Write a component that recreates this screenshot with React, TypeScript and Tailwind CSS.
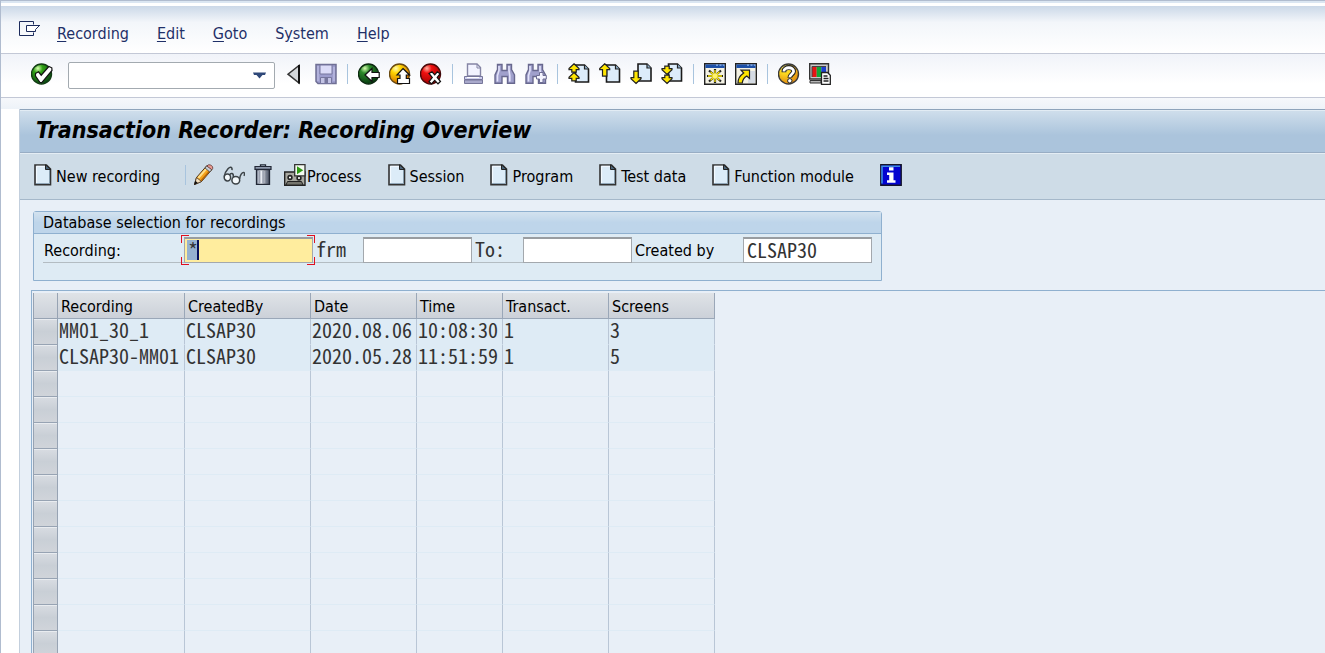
import type { ReactNode } from "react";

function Svg({ children }: { children: ReactNode }) {
  return (
    <svg viewBox="0 0 22 22" className="block h-[22px] w-[22px] shrink-0" aria-hidden="true">
      {children}
    </svg>
  );
}

function Ball({ id, light, mid, dark, rim, children }: { id: string; light: string; mid: string; dark: string; rim: string; children: ReactNode }) {
  return (
    <Svg>
      <defs>
        <radialGradient id={id} cx="0.32" cy="0.22" r="0.8">
          <stop offset="0" stopColor={light} />
          <stop offset="0.3" stopColor={mid} />
          <stop offset="1" stopColor={dark} />
        </radialGradient>
      </defs>
      <circle cx="10.5" cy="11" r="10" fill={`url(#${id})`} stroke={rim} strokeWidth="1.4" />
      {children}
    </Svg>
  );
}

const EnterIcon = () => (
  <Ball id="enter" light="#d8ffb0" mid="#2fa014" dark="#0a4a12" rim="#123c14">
    <path d="M4.5 10.5 7.5 8.8 10.2 12.2 17.8 3.5 20.8 4.8 21 7.5 11 19.5 9 19.5 4.5 13Z" fill="#fff" stroke="#111" strokeWidth="1.2" />
  </Ball>
);
const BackIcon = () => (
  <Ball id="back" light="#d8ffb0" mid="#2c8a2a" dark="#06380e" rim="#0c2a10">
    <path d="M7 12 14 5.5V9.5H21.2V14.5H14V18.5Z" fill="#fff" stroke="#111" strokeWidth="1.2" />
  </Ball>
);
const ExitIcon = () => (
  <Ball id="exit" light="#fffbb0" mid="#ffd400" dark="#d06a00" rim="#6a4a10">
    <path d="M14 5.5 20.5 12H17.3V15.5H20.5V20.5H8.5V15.5H11V12H8Z" fill="#fff" stroke="#111" strokeWidth="1.2" />
  </Ball>
);
const CancelIcon = () => (
  <Ball id="cancel" light="#ffb0a0" mid="#f01010" dark="#a00000" rim="#4a0808">
    <path d="M9 10.5 12 8.8 14.7 11.8 17.3 8.8 20 10.8 17.2 14.5 20.5 18.5 18 20.8 14.7 17.3 11.5 20.8 9 18.7 12.3 14.5Z" fill="#fff" stroke="#111" strokeWidth="1.2" />
  </Ball>
);
const HistoryIcon = () => (
  <Svg>
    <path d="M15 2.5V20L4 11.2Z" fill="#d3d6da" stroke="#333" strokeWidth="1.5" />
    <path d="M15 2V20.5" stroke="#111" strokeWidth="2" />
  </Svg>
);
const SaveIcon = () => (
  <Svg>
    <path d="M1 1.5H21V20.5H3L1 18.5Z" fill="#9d9dcd" stroke="#6f6f94" strokeWidth="1.5" />
    <path d="M5 2H17V11H5Z" fill="#dcdcf8" stroke="#76769e" />
    <path d="M5.5 14.5H16.5V20.5H5.5Z" fill="#c3c3e4" stroke="#76769e" />
    <path d="M9.5 15H13V20H9.5Z" fill="#77779e" />
    <path d="M3 3V18M19 4V18" stroke="#c6c6ea" />
  </Svg>
);
const PrintIcon = () => (
  <Svg>
    <path d="M4.5 1H14L17.5 4.5V13H4.5Z" fill="#f2f3ff" stroke="#8585a5" strokeWidth="1.4" />
    <path d="M14 1V5H18" fill="none" stroke="#8585a5" />
    <path d="M1.5 13.5H19.5V16.5H1.5Z" fill="#cfcfef" stroke="#77779a" />
    <path d="M1.5 17H19.5V20.5H1.5Z" fill="#a9a9cb" stroke="#77779a" />
    <path d="M4 14.5H16" stroke="#fff" />
  </Svg>
);
const Binoculars = () => (
  <>
    <path d="M3.5 1.5H8V7.5H13V1.5H17.5V6.5L20.5 12V20.3H13.5V13.5H8V20.3H1V12L3.5 6.5Z" fill="#a0a0cc" stroke="#68688e" strokeWidth="1.4" />
    <path d="M5 3V7.5L3.5 12.5V18.5M15 3V7.5L15.8 12.5V18.5" fill="none" stroke="#e3e3fa" strokeWidth="1.6" />
  </>
);
const FindIcon = () => (
  <Svg>
    <Binoculars />
  </Svg>
);
const FindNextIcon = () => (
  <Svg>
    <Binoculars />
    <path d="M14.5 9.5H18V12.5H21.3V16H18V19.5H14.5V16H11.5V12.5H14.5Z" fill="#f4f4ff" stroke="#6e6e94" />
  </Svg>
);

const SmallPage = ({ x }: { x: number }) => (
  <g transform={`translate(${x} 0)`}>
    <path d="M0 2H9L13 6V19H0Z" fill="#dcecfa" stroke="#1a1a1a" strokeWidth="1.6" />
    <path d="M9 2V6H13" fill="#8fb0cc" stroke="#222" strokeWidth="1.2" />
  </g>
);
const UpArrow = ({ x, y, h }: { x: number; y: number; h: number }) => (
  <path d={`M${x} ${y}l5 4.8v1h-2.8v${h}h-4.4v-${h}h-2.8v-1z`} fill="#ffe600" stroke="#222" strokeWidth="1.2" />
);
const DownArrow = ({ x, y, h }: { x: number; y: number; h: number }) => (
  <path d={`M${x} ${y}l5 -4.8v-1h-2.8v-${h}h-4.4v${h}h-2.8v1z`} fill="#ffe600" stroke="#222" strokeWidth="1.2" />
);
const FirstPageIcon = () => (
  <Svg>
    <SmallPage x={7.5} />
    <UpArrow x={6} y={0.8} h={2.5} />
    <UpArrow x={6} y={9.5} h={2.5} />
  </Svg>
);
const PrevPageIcon = () => (
  <Svg>
    <SmallPage x={7.5} />
    <UpArrow x={5.7} y={0.8} h={6.5} />
  </Svg>
);
const NextPageIcon = () => (
  <Svg>
    <g transform="translate(0 -1)">
      <SmallPage x={8} />
    </g>
    <DownArrow x={6} y={20.5} h={6.5} />
  </Svg>
);
const LastPageIcon = () => (
  <Svg>
    <g transform="translate(0 -1)">
      <SmallPage x={7.5} />
    </g>
    <DownArrow x={6} y={11.5} h={2.5} />
    <DownArrow x={6} y={20.5} h={2.5} />
  </Svg>
);
const WindowFrame = () => (
  <>
    <path d="M0.7 0.7H21.3V21.3H0.7Z" fill="#f4f2e4" stroke="#222" strokeWidth="1.4" />
    <path d="M1.4 1.4H20.6V5H1.4Z" fill="#1d50a8" />
    <path d="M12 2.2H14M15.5 2.2H17.5M18.8 2.2H20.3" stroke="#8fb8ee" strokeWidth="1.2" />
  </>
);
const NewSessionIcon = () => (
  <Svg>
    <WindowFrame />
    <path d="M11 6V10.5M11 15.5V20M3 13H8.5M13.5 13H19M5 7.5 9 11M17 7.5 13 11M5 18.5 9 15M17 18.5 13 15" stroke="#222" strokeWidth="2.2" />
    <path d="M11 7V19M4 13H18M6.5 8.7 15.5 17.3M15.5 8.7 6.5 17.3" stroke="#ffea00" strokeWidth="1.3" />
    <circle cx="11" cy="13" r="2.4" fill="#fff36a" />
  </Svg>
);
const ShortcutIcon = () => (
  <Svg>
    <WindowFrame />
    <path d="M13 8H20V20H13Z" fill="#d5dbe3" />
    <path d="M6 7.2H14.5V15.5L11.8 13C9 14.5 7.6 16.8 7.3 20H3C3 15.8 5 12.4 8.7 10Z" fill="#ffe600" stroke="#222" strokeWidth="1.2" />
  </Svg>
);
const HelpIcon = () => (
  <Ball id="help" light="#fff9a0" mid="#ffdc20" dark="#e08a10" rim="#3a3a3a">
    <path d="M6 9.3V8C6 3.4 15.6 3.2 15.6 8.3C15.6 11 11.8 11.5 11.8 14.8" fill="none" stroke="#222" strokeWidth="4.8" />
    <circle cx="11.8" cy="17.8" r="2.2" fill="#fff" stroke="#222" />
    <path d="M6 8.6V8C6 3.8 15.6 3.4 15.6 8.3C15.6 11 11.8 11.5 11.8 14.2" fill="none" stroke="#fff" strokeWidth="2.8" />
  </Ball>
);
const LayoutIcon = () => (
  <Svg>
    <path d="M0.7 0.7H19.5V16H0.7Z" fill="#c9c9c9" stroke="#333" strokeWidth="1.4" />
    <path d="M3 3.5H7.7V14H3Z" fill="#e81414" />
    <path d="M7.7 3.5H12.3V14H7.7Z" fill="#12a836" />
    <path d="M12.3 3.5H17V14H12.3Z" fill="#1b3fd0" />
    <path d="M3 14V3.5H17" fill="none" stroke="#444" />
    <path d="M1 17.5H12V20H1Z" fill="#b5b5b5" stroke="#333" />
    <path d="M12.5 9.5H18.5L21.3 12.3V21.3H12.5Z" fill="#fff" stroke="#222" strokeWidth="1.3" />
    <path d="M14.5 13H18.5M14.5 15.5H19.5M14.5 18H19.5" stroke="#222" strokeWidth="1.3" />
  </Svg>
);
const PencilIcon = () => (
  <Svg>
    <path d="M1.5 20.5 3.5 13.5 14 1.5 19 5.5 8.5 17.5Z" fill="#f5a21a" stroke="#4a3420" />
    <path d="M5.2 14 14.6 3.3" stroke="#ffdf8a" strokeWidth="2" />
    <path d="M8.3 16.5 17.8 5.8" stroke="#b46408" strokeWidth="1.4" />
    <path d="M12 4 14 1.5 19 5.5 16.8 8Z" fill="#c9ced6" stroke="#444" strokeWidth="0.8" />
    <path d="M13.8 2 15.5 0.8C17.8 0.4 20 2.2 19.8 4.3L18.6 5.6Z" fill="#e99a92" stroke="#5a3430" strokeWidth="0.8" />
    <path d="M1.5 20.5 3.5 13.5 8.5 17.5Z" fill="#f4dfbd" stroke="#4a3420" strokeWidth="0.8" />
    <path d="M1 21 2.4 16.8 4.8 19Z" fill="#111" />
  </Svg>
);
const GlassesIcon = () => (
  <Svg>
    <g fill="none" stroke="#3c4347" strokeWidth="1.5">
      <path d="M9 6.2C9.4 2.5 7 2.6 5 4.8C3 7 1.5 9.6 1.2 12.6" />
      <path d="M16.6 15C17 11 19 8.2 21 8.6C22 9 21.6 10.8 20.8 11.8" />
      <ellipse cx="4.4" cy="13.4" rx="3.2" ry="3.5" fill="#f4f9fc" />
      <ellipse cx="12.8" cy="16.2" rx="3.9" ry="3.8" fill="#f4f9fc" />
      <path d="M6.6 11C7.6 8.6 11 8.8 10.2 13" />
    </g>
  </Svg>
);
const TrashIcon = () => (
  <Svg>
    <defs>
      <linearGradient id="can">
        <stop offset="0" stopColor="#7e8799" />
        <stop offset="0.35" stopColor="#f2f5fb" />
        <stop offset="1" stopColor="#3e4658" />
      </linearGradient>
    </defs>
    <path d="M3.5 5.5H16.5V20.3H3.5Z" fill="url(#can)" stroke="#222836" strokeWidth="1.3" />
    <path d="M6.8 7V19M10 7V19M13.2 7V19" stroke="#6b7488" strokeWidth="0.7" />
    <path d="M2 2.5H18V5.3H2Z" fill="#8e98ac" stroke="#222836" strokeWidth="1.2" />
    <path d="M7.5 2.3V0.8H12.5V2.3" fill="none" stroke="#222836" strokeWidth="1.3" />
  </Svg>
);
const ProcessIcon = () => (
  <Svg>
    <path d="M0.7 8H21V21.3H0.7Z" fill="#a8a8a0" stroke="#222" strokeWidth="1.4" />
    <path d="M3.5 17.5H17.5L19 21H2Z" fill="#74746c" stroke="#222" />
    <circle cx="6" cy="13.5" r="1.9" fill="#fff" stroke="#222" strokeWidth="1.6" />
    <circle cx="15" cy="14" r="1.9" fill="#fff" stroke="#222" strokeWidth="1.6" />
    <path d="M10.7 0.7H21V11.8H10.7Z" fill="#f4faf0" stroke="#333" strokeWidth="1.3" />
    <path d="M13 2.2 19.2 6.3 13 10.3Z" fill="#2f9a14" />
  </Svg>
);
const PageIcon = () => (
  <svg viewBox="0 0 18 22" className="block h-[22px] w-[18px] shrink-0" aria-hidden="true">
    <path d="M1 1H12.5L16.5 5V20.7H1Z" fill="#dcecf8" stroke="#333" strokeWidth="1.6" />
    <path d="M2.5 2.3H11.5M2.6 2.5V19" stroke="#f6fbff" />
    <path d="M11.5 0.8V5.5H16.8Z" fill="#4a6378" stroke="#222" />
    <path d="M15.5 6V19.5H2" fill="none" stroke="#7d95a8" strokeWidth="0.8" />
  </svg>
);
const InfoIcon = () => (
  <Svg>
    <path d="M0.8 0.8H21.2V21.2H0.8Z" fill="#0303d0" stroke="#151528" strokeWidth="1.4" />
    <path d="M2 19.5V2.2H20" fill="none" stroke="#3f8ce0" strokeWidth="1.6" />
    <path d="M9 3.2H13.5V6.6H9ZM7 8.6H13.5V16.2H15.5V18.8H7V16.2H9.2V11H7Z" fill="#fff" />
  </Svg>
);
const MenuIcon = () => (
  <svg viewBox="0 0 22 17" className="block h-[17px] w-[22px]" aria-hidden="true">
    <path d="M14.5 4.5V1.5H0.5V15.5H14.5V12.5" fill="none" stroke="#1c2b5c" />
    <path d="M21 5.5H7.5V11.5H16.5V9.5L20.5 5.5" fill="#fff" stroke="#1c2b5c" />
  </svg>
);

const Sep = () => <span className="mx-px h-5 w-px shrink-0 bg-[#a8c4de]" />;

type Tool = { label: string; Icon: () => ReactNode };
const navGroups: Tool[][] = [
  [
    { label: "Back", Icon: BackIcon },
    { label: "Exit", Icon: ExitIcon },
    { label: "Cancel", Icon: CancelIcon },
  ],
  [
    { label: "Print", Icon: PrintIcon },
    { label: "Find", Icon: FindIcon },
    { label: "Find next", Icon: FindNextIcon },
  ],
  [
    { label: "First page", Icon: FirstPageIcon },
    { label: "Previous page", Icon: PrevPageIcon },
    { label: "Next page", Icon: NextPageIcon },
    { label: "Last page", Icon: LastPageIcon },
  ],
  [
    { label: "Create session", Icon: NewSessionIcon },
    { label: "Create shortcut", Icon: ShortcutIcon },
  ],
  [
    { label: "Help", Icon: HelpIcon },
    { label: "Customize layout", Icon: LayoutIcon },
  ],
];

function IconButton({ label, Icon }: Tool) {
  return (
    <button type="button" aria-label={label} className="shrink-0">
      <Icon />
    </button>
  );
}

const menus: [string, string, string][] = [
  ["", "R", "ecording"],
  ["", "E", "dit"],
  ["", "G", "oto"],
  ["S", "y", "stem"],
  ["", "H", "elp"],
];

const pageButtons = ["Session", "Program", "Test data", "Function module"];

const columns = ["Recording", "CreatedBy", "Date", "Time", "Transact.", "Screens"];
const records = [
  ["MM01_30_1", "CLSAP30", "2020.08.06", "10:08:30", "1", "3"],
  ["CLSAP30-MM01", "CLSAP30", "2020.05.28", "11:51:59", "1", "5"],
];
const rows = [...records, ...Array.from({ length: 11 }, () => ["", "", "", "", "", ""])];

const mono = "font-['Noto_Sans_Mono_CJK_KR','Liberation_Mono',monospace] font-thin text-[20px] leading-[22px] text-[#333]";
const field = `h-[26px] border border-[#a3a8ad] border-t-2 border-t-[#999da1] px-[3px] pb-[3px] outline-none ${mono}`;
const fieldLabel = "flex h-[26px] items-center border-b border-[#b3bcc2]";

function Corner({ className }: { className: string }) {
  return <span className={`absolute h-2 w-2 border-[#e01020] ${className}`} />;
}

export default function App() {
  return (
    <div className="flex h-screen flex-col overflow-hidden border-l border-t border-[#b0bccf] bg-white font-['DejaVu_Sans_Condensed','DejaVu_Sans',sans-serif] text-[16px] leading-5 text-black">
      <div className="h-[5px] shrink-0 border-t-2 border-[#dbe6f2] bg-white" />
      <header className="flex h-12 shrink-0 items-start border-b border-[#c3c8d6] bg-linear-to-b from-[#cbd8e8] via-[#f3f6fa] via-35% to-white pl-[18px] pt-[14px] text-[#1f3068]">
        <button type="button" aria-label="Menu">
          <MenuIcon />
        </button>
        <nav className="ml-4 flex gap-7 pt-[4px]">
          {menus.map(([pre, key, post]) => (
            <button type="button" key={key}>
              {pre}
              <u className="underline-offset-2">{key}</u>
              {post}
            </button>
          ))}
        </nav>
      </header>

      <div className="flex h-11 shrink-0 items-center gap-[9px] border-b border-[#c3c8d6] bg-linear-to-b from-[#f0f3f9] to-white to-70% pb-[3px] pl-[30px]">
        <IconButton label="Enter" Icon={EnterIcon} />
        <div className="ml-[6px] mt-[2px] flex h-[27px] w-[207px] shrink-0 items-center rounded-[2px] border border-[#a3aab0] bg-white">
          <input aria-label="Command field" className="h-full min-w-0 flex-1 px-1 outline-none" />
          <button type="button" aria-label="Command history" className="px-2">
            <svg viewBox="0 0 13 7" className="block h-[7px] w-[13px]" aria-hidden="true">
              <path d="M0 0.5H13L12 3H9.5L6.5 6.5 3.5 3H1Z" fill="#2f4879" />
            </svg>
          </button>
        </div>
        <IconButton label="Hide command field" Icon={HistoryIcon} />
        <IconButton label="Save" Icon={SaveIcon} />
        {navGroups.map((group) => (
          <div key={group[0].label} className="flex items-center gap-[9px]">
            <Sep />
            {group.map((tool) => (
              <IconButton key={tool.label} {...tool} />
            ))}
          </div>
        ))}
      </div>

      <div className="h-[11px] shrink-0 bg-linear-to-b from-[#f6f8fb] to-[#edf2f8]" />

      <main className="ml-[18px] flex min-h-0 flex-1 flex-col border-l border-[#c3cfdd] bg-[#e8eff7]">
        <div className="flex h-11 shrink-0 items-center border-b border-t border-b-[#98adc4] border-t-[#8ea4bb] bg-linear-to-b from-[#d0dfec] to-[#abc4dc] to-60% pb-[2px] pl-4 shadow-[inset_0_1px_0_#e2ecf4]">
          <h1 className="text-[23px] font-bold italic leading-6">Transaction Recorder: Recording Overview</h1>
        </div>

        <div className="flex h-[47px] shrink-0 items-center border-b border-[#a5b8ca] bg-[#cedce7] pb-[2px] pl-[14px] shadow-[inset_0_1px_0_#e4edf4]">
          <button type="button" className="flex w-[150px] shrink-0 items-center gap-1 whitespace-nowrap">
            <PageIcon />
            <span className="pt-[3px]">New recording</span>
          </button>
          <Sep />
          <div className="ml-[6px] flex items-center gap-2">
            <IconButton label="Change" Icon={PencilIcon} />
            <IconButton label="Display" Icon={GlassesIcon} />
            <IconButton label="Delete" Icon={TrashIcon} />
          </div>
          <button type="button" className="ml-[9px] mr-[26px] flex shrink-0 items-center gap-px whitespace-nowrap">
            <ProcessIcon />
            <span className="pt-[3px]">Process</span>
          </button>
          <div className="flex items-center gap-[26px]">
            {pageButtons.map((label) => (
              <button type="button" key={label} className="flex shrink-0 items-center gap-1 whitespace-nowrap">
                <PageIcon />
                <span className="pt-[3px]">{label}</span>
              </button>
            ))}
            <IconButton label="Information" Icon={InfoIcon} />
          </div>
        </div>

        <section aria-labelledby="selection" className="ml-[13px] mt-[11px] w-[849px] shrink-0 rounded-t-[3px] border border-[#8fb0cf] bg-[#deebf4]">
          <h2 id="selection" className="flex h-[22px] items-center border-b border-[#8fb0cf] bg-linear-to-b from-[#d3e2ef] to-[#bed5ea] to-50% pl-[9px]">
            Database selection for recordings
          </h2>
          <div className="flex h-[46px] items-start pl-[9px] pt-[3px]">
            <label htmlFor="recording" className={`${fieldLabel} w-[141px] pl-px pt-[3px]`}>
              Recording:
            </label>
            <div className="relative bg-[#ffed9e]">
              <span className="absolute left-[3px] top-[3px] h-5 w-3 border-r-2 border-[#06105c] bg-[#96b1cf]" />
              <input id="recording" defaultValue="*" className={`${field} relative block w-[129px] bg-transparent`} />
              <Corner className="-left-[3px] -top-[2px] border-l border-t" />
              <Corner className="-right-[2px] -top-[2px] border-r border-t" />
              <Corner className="-bottom-[2px] -left-[3px] border-b border-l" />
              <Corner className="-bottom-[2px] -right-[2px] border-b border-r" />
            </div>
            <label htmlFor="from" className={`${fieldLabel} w-[50px] pb-[2px] pl-[3px] ${mono}`}>
              frm
            </label>
            <input id="from" className={`${field} w-[109px] bg-white`} />
            <label htmlFor="to" className={`${fieldLabel} w-[51px] pb-[2px] pl-[3px] ${mono}`}>
              To:
            </label>
            <input id="to" className={`${field} w-[109px] bg-white`} />
            <label htmlFor="creator" className={`${fieldLabel} w-[111px] pl-[3px] pt-[3px]`}>
              Created by
            </label>
            <input id="creator" defaultValue="CLSAP30" className={`${field} w-[129px] bg-white`} />
          </div>
        </section>

        <section aria-label="Recordings" className="ml-[11px] mt-[9px] min-h-0 flex-1 overflow-hidden border-l border-t border-[#8fb0cf] pl-px pt-[2px]">
          <table className="w-[682px] table-fixed border-separate border-spacing-0">
            <colgroup>
              <col className="w-[25px]" />
              <col className="w-[127px]" />
              <col className="w-[126px]" />
              <col className="w-[106px]" />
              <col className="w-[86px]" />
              <col className="w-[106px]" />
              <col className="w-[106px]" />
            </colgroup>
            <thead>
              <tr className="h-[26px] bg-linear-to-b from-[#dfe3e7] to-[#cbd0d8]">
                <th className="border-b border-l border-r border-[#97a3b3] p-0" aria-label="Row selection" />
                {columns.map((name) => (
                  <th key={name} className="border-b border-r border-[#9aa7b8] pb-0 pl-[3px] pr-0 pt-[2px] text-left font-normal">
                    {name}
                  </th>
                ))}
              </tr>
            </thead>
            <tbody>
              {rows.map((row, r) => (
                <tr key={r} className={row[0] ? "h-[26px] bg-[#deebf5]" : "h-[26px]"}>
                  <td className="border-b border-l border-r border-[#97a3b3] bg-linear-to-b from-[#d8dce2] via-[#c9cfd6] to-[#d0d4da] p-0 shadow-[inset_0_1px_0_#e9ecf0]" />
                  {row.map((cell, c) => (
                    <td key={c} className={`whitespace-nowrap border-b border-r border-b-[#deebf5] border-r-[#b9c6d6] pb-[3px] pl-px pr-0 pt-0 ${mono}`}>
                      {cell}
                    </td>
                  ))}
                </tr>
              ))}
            </tbody>
          </table>
        </section>
      </main>
    </div>
  );
}
